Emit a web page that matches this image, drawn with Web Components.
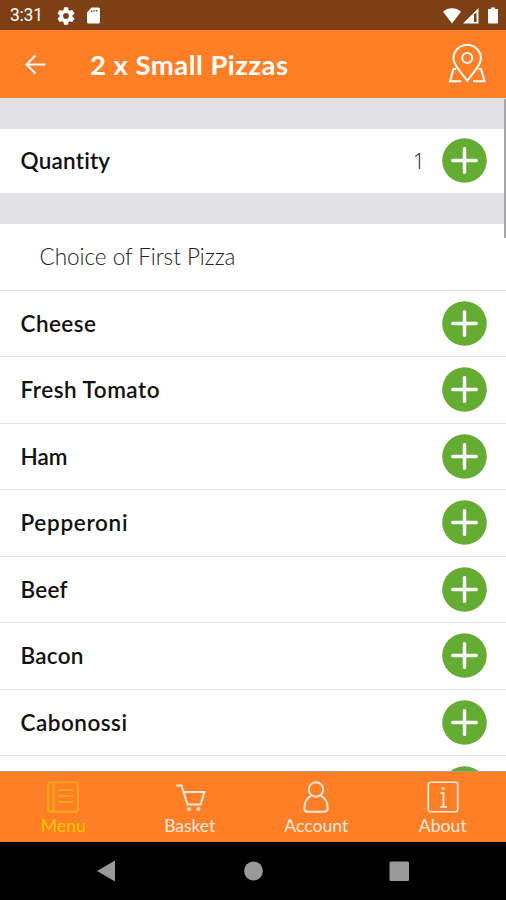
<!DOCTYPE html>
<html lang="en">
<head>
<meta charset="utf-8">
<title>2 x Small Pizzas</title>
<style>
html, body { margin: 0; height: 100%; overflow: hidden; background: #fff; font-family: Lato, "Open Sans", sans-serif; }
</style>
</head>
<body>
<pizza-app></pizza-app>
<script>
const define = (name, html, setup) => {
  const template = document.createElement('template');
  template.innerHTML = html;
  customElements.define(name, class extends HTMLElement {
    connectedCallback() {
      if (this.shadowRoot) return;
      this.attachShadow({ mode: 'open' }).append(template.content.cloneNode(true));
      if (setup) setup(this, this.shadowRoot);
    }
  });
};

/* Text tracked so that its line has the advance given in "width". */
define('tracked-text', `
<style>:host{display:block;white-space:nowrap;line-height:1}span{display:inline-block}</style>
<span></span>`, (host, root) => {
  const span = root.querySelector('span');
  span.textContent = host.getAttribute('text');
  const gap = +host.getAttribute('width') - span.getBoundingClientRect().width;
  const space = gap / Math.max(1, span.textContent.length - 1);
  span.style.letterSpacing = space + 'px';
  span.style.marginRight = -space + 'px';
});

define('status-bar', `
<style>
:host{display:flex;height:30px;box-sizing:border-box;background:#7f3f14;color:#fff;align-items:center;padding:1px 7px 0 10px;font-family:Roboto,sans-serif;font-size:17.500px}
svg{display:block;fill:#fff}
.gear{margin-left:14px}.card{margin-left:11px}.wifi{margin-left:auto}.cell{margin-left:2px}.bat{margin-left:8px}
</style>
<tracked-text text="3:31" width="33"></tracked-text>
<svg class="gear" width="18" height="18" viewBox="2 2 20 20"><path d="M19.14 12.94c.04-.3.06-.61.06-.94s-.02-.64-.07-.94l2.03-1.58a.49.49 0 0 0 .12-.61l-1.92-3.32a.49.49 0 0 0-.59-.22l-2.39.96a7 7 0 0 0-1.62-.94l-.36-2.54A.48.48 0 0 0 13.92 2.400h-3.840a.48.48 0 0 0-.47.410l-.36 2.540c-.59.240-1.130.570-1.620.940l-2.390-.960a.48.48 0 0 0-.59.220L2.740 8.870a.47.47 0 0 0 .12.610l2.030 1.580c-.05.300-.09.630-.09.940s.02.640.07.940l-2.030 1.580a.49.49 0 0 0-.12.610l1.920 3.320c.12.220.370.290.590.220l2.390-.960c.5.380 1.030.700 1.620.940l.36 2.540c.05.240.240.410.480.410h3.840c.24 0 .44-.17.47-.41l.36-2.54a7 7 0 0 0 1.620-.94l2.390.96c.22.08.47 0 .59-.22l1.920-3.320a.47.47 0 0 0-.12-.61zM12 15.200a3.200 3.200 0 1 1 0-6.400 3.200 3.200 0 0 1 0 6.400z"/></svg>
<svg class="card" width="15" height="17" viewBox="0 0 15 17"><path fill-rule="evenodd" d="M5.500.5H12.500a1.500 1.500 0 0 1 1.500 1.500v13a1.500 1.500 0 0 1-1.500 1.500h-10A1.500 1.500 0 0 1 1 15V5.500zM5 3.500v1.500h1.300v-1.500zM7.500 3v1.500h1.300V3zM10 3v1.500h1.300V3z"/></svg>
<svg class="wifi" width="18" height="16" viewBox="0 0 18 16"><path d="M0 3.700C5-.9 13-.9 18 3.700L9 15.500z"/></svg>
<svg class="cell" width="16" height="16" viewBox="0 0 16 16"><path fill-rule="evenodd" d="M0 15.500L15.500 0V15.500zM11 6.500v7.500h2.500V4.500z"/></svg>
<svg class="bat" width="12" height="17" viewBox="0 0 12 17"><path d="M4 .5h4V2h2.500Q11 2 11 2.500v13q0 1-1 1H2q-1 0-1-1v-13Q1 2 1.500 2H4z"/></svg>`);

define('app-header', `
<style>
:host{display:flex;height:68px;box-sizing:border-box;background:#ff7f27;color:#fff;align-items:center;padding:0 20px 0 25px;font-size:27.500px;font-weight:700}
svg{display:block;fill:none;stroke:#fff}
tracked-text{margin:1px auto 0 44px}
</style>
<svg width="21" height="20" viewBox="0 0 21 20" stroke-width="2"><path d="M20.500 10.500H2M10.500 1.500L1.500 10.500L10.500 19.500"/></svg>
<tracked-text text="2 x Small Pizzas" width="198"></tracked-text>
<svg width="38" height="40" viewBox="0 0 38 40" stroke-width="2"><path d="M19.200 37C14.500 29.500 5.500 22 5.500 14.500a13.700 13.700 0 0 1 27.400 0C32.900 22 24 29.500 19.200 37z"/><circle cx="19.200" cy="14" r="5"/><path d="M8 25H5.500L2 37.200H13.500M30.500 25H33L36.500 37.200H25"/></svg>`);

define('add-button', `
<style>:host{display:block;width:45px;height:45px}svg{display:block}</style>
<svg width="45" height="45" viewBox="0 0 45 45"><circle cx="22.500" cy="22.500" r="22.300" fill="#65ac33"/><path d="M10.800 22.500H34.200M22.500 10.800V34.200" stroke="#fff" stroke-width="3.500" stroke-linecap="round"/></svg>`);

define('option-row', `
<style>
:host{display:flex;flex:none;height:66.500px;box-sizing:border-box;border-bottom:1.500px solid #e2e2e3;background:#fff;color:#111;align-items:center;padding:0 19px 0 20.500px;font-size:22.500px;font-weight:600}
:host([plain]){height:64.400px;border:0}
tracked-text{margin-top:1px}
.count{margin:0 17px 0 auto;font:300 21.500px "Open Sans",sans-serif;color:#222}
</style>
<tracked-text></tracked-text><span class="count"></span><add-button></add-button>`, (host, root) => {
  root.querySelector('.count').textContent = host.getAttribute('count') || '';
});

define('section-title', `
<style>
:host{display:flex;flex:none;height:67px;box-sizing:border-box;border-bottom:1.500px solid #e2e2e3;align-items:center;padding:2px 0 0 39.500px;font-size:22.500px;font-weight:300;color:#222}
</style>
<tracked-text text="Choice of First Pizza" width="196"></tracked-text>`);

/* Builds a row, attaches it, then gives it its label. */
const makeRow = (text, width, count) => {
  const row = document.createElement('option-row');
  if (count) { row.setAttribute('plain', ''); row.setAttribute('count', count); }
  return { row, attach(parent) {
    parent.append(row);
    const old = row.shadowRoot.querySelector('tracked-text');
    const label = document.createElement('tracked-text');
    label.setAttribute('text', text);
    label.setAttribute('width', width);
    old.replaceWith(label);
  } };
};

define('option-list', `
<style>
:host{display:flex;flex-direction:column;height:674px;box-sizing:border-box;overflow:hidden;position:relative;border-bottom:1px solid #b09890}
.band{flex:none;height:30.600px;background:#e2e2e4}
.bar{position:absolute;right:0;top:1px;width:2px;height:139px;background:#a5a5a7}
.rows{display:flex;flex-direction:column}
</style>
<div class="band"></div><div class="rows first"></div><div class="band"></div>
<section-title></section-title>
<div class="rows rest"></div><div class="bar"></div>`, (host, root) => {
  makeRow('Quantity', 90, '1').attach(root.querySelector('.first'));
  [['Cheese', 75.5], ['Fresh Tomato', 139], ['Ham', 47], ['Pepperoni', 107], ['Beef', 47], ['Bacon', 63], ['Cabonossi', 106.5]]
    .forEach(([text, width]) => makeRow(text, width).attach(root.querySelector('.rest')));
  const next = document.createElement('option-row');
  root.querySelector('.rest').append(next);
  next.shadowRoot.querySelector('tracked-text').remove();
});

define('tab-item', `
<style>
:host{display:flex;flex-direction:column;align-items:center;flex:1;padding-top:9px;color:#ffe9dc;font-size:17.500px;font-weight:400}
:host([active]){color:#ffc800}
::slotted(svg){display:block;fill:none;stroke:currentColor;stroke-width:1.600}
tracked-text{margin-top:4px}
</style>
<slot></slot>`, (host, root) => {
  const label = document.createElement('tracked-text');
  label.setAttribute('text', host.getAttribute('label'));
  label.setAttribute('width', host.getAttribute('width'));
  root.append(label);
});

define('tab-bar', `
<style>:host{display:flex;height:70px;background:#ff7f27}</style>
<tab-item active label="Menu" width="45"><svg width="32" height="32" viewBox="0 0 32 32" style="color:#ffa51c"><rect x="1.200" y="1.200" width="29.600" height="29.600" rx="3" stroke-width="2"/><path d="M6.500 1V31M11 9H26M11 15H26M11 21H26" stroke-width="2"/></svg></tab-item>
<tab-item label="Basket" width="51"><svg width="32" height="32" viewBox="0 0 32 32"><path d="M2 4.500H7.500L13.500 23.500H26.500L30.500 11H9.500" stroke-width="1.900"/><circle cx="15" cy="28" r="2" fill="currentColor" stroke="none"/><circle cx="24.500" cy="28" r="2" fill="currentColor" stroke="none"/></svg></tab-item>
<tab-item label="Account" width="64"><svg width="32" height="32" viewBox="0 0 32 32"><circle cx="16" cy="8.500" r="7.200" stroke-width="1.900"/><path d="M11.500 14.500C6.500 17 4.300 21 4.300 27.500Q4.300 30.700 7.500 30.700H24.500Q27.700 30.700 27.700 27.500C27.700 21 25.500 17 20.500 14.500" stroke-width="1.900"/></svg></tab-item>
<tab-item label="About" width="48"><svg width="32" height="32" viewBox="0 0 32 32"><rect x="1.300" y="1.300" width="29.400" height="29.400" rx="2.500"/><path d="M13.500 12H16.500V25.500M13 25.800H20" stroke-width="1.800"/><circle cx="16.200" cy="7.500" r="1.500" fill="currentColor" stroke="none"/></svg></tab-item>`);

define('system-nav', `
<style>:host{display:flex;height:58px;background:#000;justify-content:center}svg{display:block}</style>
<svg width="506" height="58" viewBox="0 0 506 58" fill="#999"><path d="M97 29L115 18.500V39.500z"/><circle cx="253.500" cy="29" r="9.400"/><rect x="389.500" y="19.500" width="19.500" height="19.500" rx="1.500"/></svg>`);

define('pizza-app', `
<style>:host{display:flex;flex-direction:column;width:506px;height:900px}</style>
<status-bar></status-bar><app-header></app-header><option-list></option-list><tab-bar></tab-bar><system-nav></system-nav>`);
</script>
</body>
</html>
